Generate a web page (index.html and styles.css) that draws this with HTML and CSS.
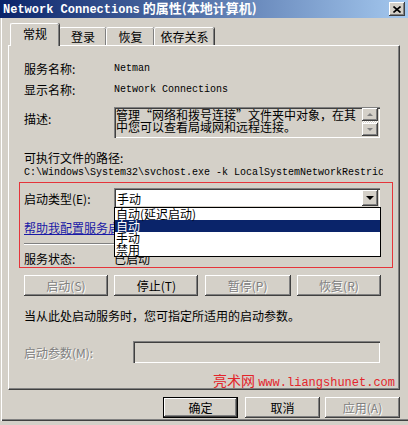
FILE: index.html
```html
<!DOCTYPE html>
<html lang="zh-CN">

<head>
    <meta charset="UTF-8">
    <meta name="viewport" content="width=device-width, initial-scale=1.0">
    <title>Network Connections 的属性</title>
    <link rel="stylesheet" href="styles.css">
</head>

<body>
    <div class="window">
        <div class="titlebar">
            <span class="title"><span class="title-en">Network Connections</span> 的属性(本地计算机)</span>
            <span class="close-btn">
                <svg width="8" height="7" viewBox="0 0 8 7">
                    <path d="M0.5 0.5 L7.5 6.5 M7.5 0.5 L0.5 6.5" stroke="#000" stroke-width="1.6" fill="none"/>
                </svg>
            </span>
        </div>

        <div class="tabs">
            <div class="tab tab-active">常规</div>
            <div class="tab tab-w47">登录</div>
            <div class="tab tab-w48">恢复</div>
            <div class="tab tab-w60">依存关系</div>
        </div>

        <div class="panel">
            <div class="field">
                <span class="label">服务名称:</span>
                <span class="mono">Netman</span>
            </div>
            <div class="field gap7">
                <span class="label">显示名称:</span>
                <span class="mono">Network Connections</span>
            </div>
            <div class="field desc-row">
                <span class="label desc-label">描述:</span>
                <div class="desc-box">
                    <div class="desc-text">管理“网络和拨号连接”文件夹中对象，在其中您可以查看局域网和远程连接。</div>
                    <div class="scrollbar">
                        <div class="sb-btn"><span class="arrow-up"></span></div>
                        <div class="sb-track"></div>
                        <div class="sb-btn"><span class="arrow-down"></span></div>
                    </div>
                </div>
            </div>
            <div class="field gap12">可执行文件的路径:</div>
            <div class="path-line mono">C:\Windows\System32\svchost.exe -k LocalSystemNetworkRestricted</div>

            <div class="red-box">
                <div class="field combo-row">
                    <span class="label">启动类型(E):</span>
                    <div class="combo">
                        <span class="combo-value">手动</span>
                        <span class="combo-btn"><span class="arrow-down dark"></span></span>
                        <div class="dropdown">
                            <div class="dd-item">自动(延迟启动)</div>
                            <div class="dd-item dd-selected">自动</div>
                            <div class="dd-item">手动</div>
                            <div class="dd-item">禁用</div>
                        </div>
                    </div>
                </div>
                <div class="field gap12"><a class="help-link" href="#">帮助我配置服务启动选项。</a></div>
                <div class="separator"></div>
                <div class="field status-row">
                    <span class="label">服务状态:</span>
                    <span>已启动</span>
                </div>
            </div>

            <div class="service-btns">
                <button class="btn btn-svc disabled">启动(S)</button>
                <button class="btn btn-svc">停止(T)</button>
                <button class="btn btn-svc btn-wide disabled">暂停(P)</button>
                <button class="btn btn-svc disabled">恢复(R)</button>
            </div>

            <div class="field gap12">当从此处启动服务时，您可指定所适用的启动参数。</div>

            <div class="param-row">
                <span class="param-label disabled">启动参数(M):</span>
                <div class="param-input"></div>
            </div>

            <div class="watermark">亮术网 <span class="wm-url">www.liangshunet.com</span></div>
        </div>

        <div class="footer">
            <button class="btn btn-foot btn-default">确定</button>
            <button class="btn btn-foot btn-cancel">取消</button>
            <button class="btn btn-foot disabled">应用(A)</button>
        </div>
    </div>
</body>

</html>
```

FILE: styles.css
```css
body {
    margin: 0;
    background-color: #d4d0c8;
    font-family: "Noto Sans CJK SC", sans-serif;
    font-size: 12px;
    color: #000;
    overflow: hidden;
}

.window {
    width: 412px;
    height: 421px;
    background-color: #d4d0c8;
    box-shadow: inset 1px 0 #d4d0c8, inset 2px 0 #fff, inset 0 -1px #404040, inset 0 -2px #808080;
}

.titlebar {
    height: 18px;
    display: flex;
    align-items: center;
    padding-left: 3px;
    background: linear-gradient(to right, #0a246a, #a6caf0);
    color: #fff;
    font-weight: bold;
}

.title {
    font-size: 13px;
    white-space: nowrap;
    line-height: 18px;
}

.title-en {
    font-family: "Liberation Mono", monospace;
    font-size: 12px;
}

.close-btn {
    margin-left: auto;
    margin-right: 7px;
    width: 16px;
    height: 14px;
    display: flex;
    align-items: center;
    justify-content: center;
    background-color: #d4d0c8;
    box-shadow: inset -1px -1px #404040, inset 1px 1px #fff, inset -2px -2px #808080;
}

.tabs {
    display: flex;
    align-items: flex-end;
    height: 27px;
    padding-left: 10px;
}

.tab {
    height: 18px;
    line-height: 17px;
    text-align: center;
    border-top: 1px solid #fff;
    border-left: 1px solid #fff;
    border-radius: 2px 2px 0 0;
    box-shadow: inset -1px 0 #808080, 1px 0 #404040;
    box-sizing: border-box;
}

.tab-active {
    width: 49px;
    height: 23px;
    line-height: 20px;
    margin-bottom: -1px;
    background-color: #d4d0c8;
    position: relative;
    z-index: 1;
}

.tab-w47 { width: 47px; }
.tab-w48 { width: 48px; }
.tab-w60 { width: 60px; }

.panel {
    margin-left: 8px;
    width: 392px;
    height: 345px;
    box-sizing: border-box;
    border-top: 1px solid #fff;
    border-left: 1px solid #fff;
    border-right: 1px solid #404040;
    border-bottom: 1px solid #404040;
    box-shadow: inset -1px -1px #808080;
    padding: 15px 19px 0 15px;
}

.field {
    display: flex;
    align-items: center;
    height: 14px;
    white-space: nowrap;
}

.label {
    width: 90px;
    flex-shrink: 0;
}

.mono {
    font-family: "Liberation Mono", monospace;
    font-size: 10px;
}

.gap7 { margin-top: 7px; }
.gap12 { margin-top: 12px; }

.desc-row {
    margin-top: 11px;
    height: 31px;
    align-items: flex-start;
}

.desc-label {
    margin-top: 3px;
}

.desc-box {
    width: 266px;
    height: 31px;
    box-sizing: border-box;
    display: flex;
    justify-content: space-between;
    box-shadow: inset 1px 1px #808080, inset 2px 2px #404040, inset -1px -1px #fff, inset -2px -2px #d4d0c8;
    padding: 1px 2px 2px 2px;
}

.desc-text {
    width: 246px;
    white-space: normal;
    font-size: 12px;
    line-height: 12px;
    padding-top: 1px;
    overflow: hidden;
}

.scrollbar {
    width: 16px;
    display: flex;
    flex-direction: column;
}

.sb-btn {
    height: 13px;
    display: flex;
    align-items: center;
    justify-content: center;
    background-color: #d4d0c8;
    box-shadow: inset -1px -1px #404040, inset 1px 1px #fff, inset -2px -2px #808080;
}

.sb-track {
    flex: 1;
    background-image: repeating-conic-gradient(#fff 0 25%, #d4d0c8 0 50%);
    background-size: 2px 2px;
}

.arrow-up,
.arrow-down {
    width: 0;
    height: 0;
    border-left: 3px solid transparent;
    border-right: 3px solid transparent;
}

.arrow-up {
    border-bottom: 3px solid #808080;
}

.arrow-down {
    border-top: 3px solid #808080;
}

.arrow-down.dark {
    border-left-width: 4px;
    border-right-width: 4px;
    border-top: 4px solid #000;
}

.path-line {
    margin-top: 2px;
    margin-right: -3px;
    height: 14px;
    line-height: 14px;
    white-space: nowrap;
    overflow: hidden;
}

.red-box {
    margin: 2px -13px 0 -5px;
    height: 86px;
    box-sizing: border-box;
    border: 1px solid #e5343a;
    padding: 5px 0 0 4px;
}

.combo-row {
    height: 20px;
}

.combo {
    width: 266px;
    height: 20px;
    box-sizing: border-box;
    position: relative;
    display: flex;
    align-items: center;
    background-color: #fff;
    box-shadow: inset 1px 1px #808080, inset 2px 2px #404040, inset -1px -1px #fff, inset -2px -2px #d4d0c8;
    padding: 0 2px 0 3px;
}

.combo-value {
    flex: 1;
}

.combo-btn {
    width: 16px;
    height: 16px;
    display: flex;
    align-items: center;
    justify-content: center;
    background-color: #d4d0c8;
    box-shadow: inset -1px -1px #404040, inset 1px 1px #fff, inset -2px -2px #808080;
}

.dropdown {
    position: absolute;
    left: 0;
    top: 19px;
    width: 267px;
    border: 1px solid #000;
    background-color: #fff;
    box-sizing: border-box;
    z-index: 2;
}

.dd-item {
    height: 12px;
    line-height: 12px;
    padding-left: 1px;
}

.dd-selected {
    background-color: #0a246a;
    color: #fff;
}

.help-link {
    color: #1a1aa6;
    text-decoration: underline;
}

.separator {
    margin-top: 9px;
    width: 356px;
    border-top: 1px solid #808080;
    border-bottom: 1px solid #fff;
}

.status-row {
    margin-top: 6px;
}

.btn {
    background-color: #d4d0c8;
    border: none;
    padding: 0;
    font-family: "Noto Sans CJK SC", sans-serif;
    font-size: 12px;
    color: #000;
    box-shadow: inset -1px -1px #404040, inset 1px 1px #fff, inset -2px -2px #808080;
}

.disabled {
    color: #808080;
    text-shadow: 1px 1px 0 #fff;
}

.service-btns {
    margin-top: 7px;
    width: 357px;
    display: flex;
    justify-content: space-between;
}

.btn-svc {
    width: 84px;
    height: 21px;
}

.btn-wide {
    width: 86px;
}

.param-row {
    margin-top: 19px;
    display: flex;
    align-items: center;
    height: 22px;
}

.param-label {
    width: 109px;
}

.param-input {
    width: 247px;
    height: 22px;
    box-sizing: border-box;
    box-shadow: inset 1px 1px #808080, inset 2px 2px #404040, inset -1px -1px #fff, inset -2px -2px #d4d0c8;
}

.watermark {
    margin: 9px -15px 0 0;
    text-align: right;
    color: #e3242b;
    font-size: 14px;
    line-height: 16px;
    white-space: nowrap;
}

.wm-url {
    font-family: "Liberation Mono", monospace;
    font-size: 12px;
}

.footer {
    margin-top: 7px;
    padding-left: 163px;
    display: flex;
}

.btn-foot {
    width: 75px;
    height: 21px;
}

.btn-default {
    box-shadow: inset 0 0 0 1px #000, inset -2px -2px #404040, inset 2px 2px #fff, inset -3px -3px #808080;
}

.btn-cancel {
    margin-left: 7px;
    margin-right: 5px;
}
```
